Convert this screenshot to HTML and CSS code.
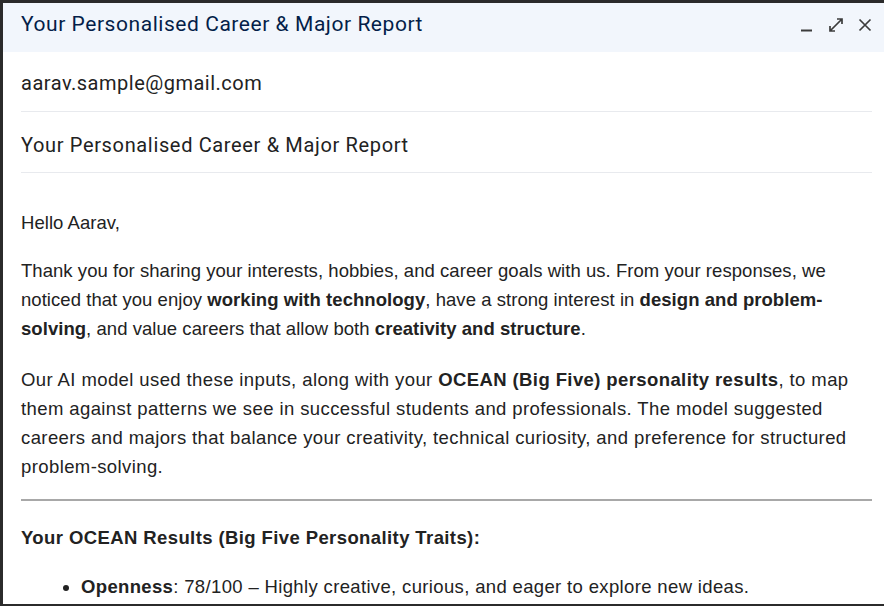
FILE: index.html
```html
<!DOCTYPE html>
<html>
<head>
<meta charset="utf-8">
<link rel="stylesheet" href="styles.css">
</head>
<body>
<div class="frame">
  <header class="bar">
    <div class="bar-title">Your Personalised Career &amp; Major Report</div>
    <div class="bar-icons">
      <svg class="ic" width="16" height="16" viewBox="0 0 16 16"><rect x="2" y="12.5" width="11" height="2" fill="#3c3c3c"/></svg>
      <svg class="ic" width="16" height="16" viewBox="0 0 16 16"><path d="M9 2h5v5M14 2L2 14M2 9v5h5" fill="none" stroke="#3c3c3c" stroke-width="1.7"/></svg>
      <svg class="ic" width="16" height="16" viewBox="0 0 16 16"><path d="M2.5 2.5l11 11M13.5 2.5l-11 11" fill="none" stroke="#3c3c3c" stroke-width="1.7"/></svg>
    </div>
  </header>
  <div class="fields">
    <div class="field">aarav.sample@gmail.com</div>
    <div class="field subject">Your Personalised Career &amp; Major Report</div>
  </div>
  <div class="body">
    <p class="greet">Hello Aarav,</p>
    <p>Thank you for sharing your interests, hobbies, and career goals with us. From your responses, we noticed that you enjoy <b>working with technology</b>, have a strong interest in <b>design and problem-solving</b>, and value careers that allow both <b>creativity and structure</b>.</p>
    <p class="wide">Our AI model used these inputs, along with your <b>OCEAN (Big Five) personality results</b>, to map them against patterns we see in successful students and professionals. The model suggested careers and majors that balance your creativity, technical curiosity, and preference for structured problem-solving.</p>
    <hr class="rule">
    <p class="heading"><b>Your OCEAN Results (Big Five Personality Traits):</b></p>
    <ul class="traits">
      <li><b>Openness</b>: 78/100 – Highly creative, curious, and eager to explore new ideas.</li>
    </ul>
  </div>
</div>
</body>
</html>
```
FILE: styles.css
```css
html, body {
  margin: 0;
  padding: 0;
  background: #2b2b2b;
  height: 100%;
  overflow: hidden;
}
.frame {
  box-sizing: border-box;
  height: 601px;
  margin: 3px 0 0 3px;
  background: #ffffff;
  overflow: hidden;
}
.bar {
  height: 49px;
  background: #f2f6fc;
  display: flex;
  align-items: center;
  justify-content: space-between;
  padding: 0 11px 0 18px;
}
.bar-title {
  font-family: Roboto, "Noto Sans", sans-serif;
  font-size: 21px;
  letter-spacing: 0.55px;
  color: #041e49;
  margin-top: -7px;
}
.bar-icons {
  display: flex;
  gap: 13px;
  align-items: center;
  margin-top: -6px;
}
.ic { display: block; }
.fields {
  padding: 0 12px 0 18px;
}
.field {
  font-family: Roboto, "Noto Sans", sans-serif;
  font-size: 20px;
  letter-spacing: 0.5px;
  color: #222222;
  height: 61px;
  line-height: 66px;
  border-bottom: 1px solid #e8eaee;
  box-sizing: border-box;
}
.field:first-child { height: 60px; line-height: 62px; }
.field.subject { letter-spacing: 0.65px; }
.body {
  padding: 35px 12px 0 18px;
  font-family: "Liberation Sans", Arial, sans-serif;
  font-size: 18.5px;
  letter-spacing: 0.05px;
  line-height: 29px;
  color: #222222;
}
.body p { margin: 0 0 22px 0; }
.body b { font-weight: bold; }
.body .greet { margin-bottom: 19px; }
.body .wide { letter-spacing: 0.4px; margin-bottom: 18px; }
.rule {
  border: none;
  border-top: 2px solid #a8a8a8;
  margin: 0 0 22px 0;
}
.body .heading { margin-bottom: 20px; letter-spacing: 0.4px; }
.traits {
  margin: 0;
  padding-left: 60px;
  letter-spacing: 0.35px;
}
.traits li { margin-bottom: 20px; }
```
